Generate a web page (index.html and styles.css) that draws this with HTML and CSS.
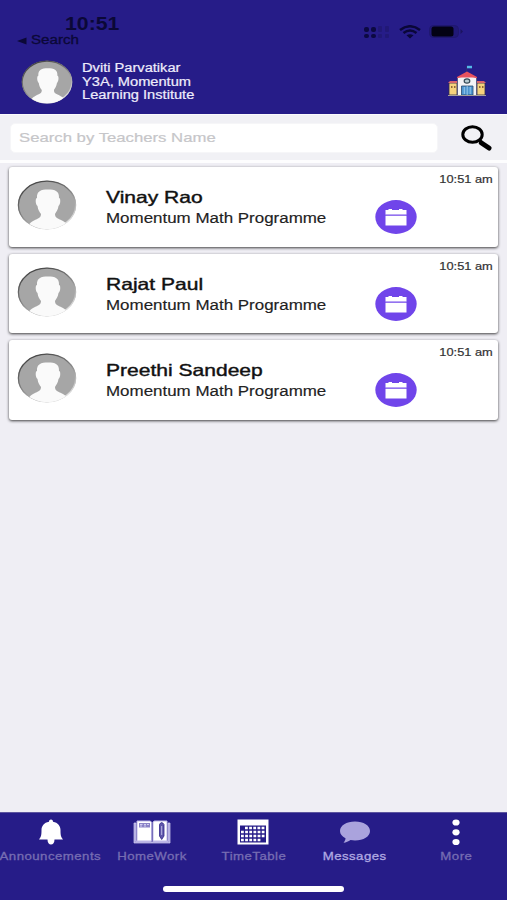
FILE: index.html
```html
<!DOCTYPE html>
<html lang="en">
<head>
    <meta charset="UTF-8">
    <meta name="viewport" content="width=device-width, initial-scale=1.0">
    <title>Messages</title>
    <link rel="stylesheet" href="styles.css">
</head>
<body>
    <!-- Shared icons -->
    <svg class="symbols" width="0" height="0">
        <symbol id="avatar" viewBox="0 0 60 50" preserveAspectRatio="none">
            <clipPath id="avatar-clip"><ellipse cx="30" cy="25" rx="29" ry="24.2"/></clipPath>
            <linearGradient id="ring" x1="0" y1="0" x2=".6" y2="1">
                <stop offset="0" stop-color="#333"/>
                <stop offset=".5" stop-color="#777"/>
                <stop offset="1" stop-color="#ddd"/>
            </linearGradient>
            <ellipse cx="30" cy="25" rx="29" ry="24.2" fill="#a6a6a6"/>
            <ellipse cx="30" cy="25" rx="28.6" ry="23.8" fill="none" stroke="url(#ring)" stroke-width="1.3"/>
            <path clip-path="url(#avatar-clip)" fill="#fafafa" d="M20 18C19.500 11 24 9.500 31 9.500S42.500 11 42 18C44 18 43.500 25 41.500 26C41 30 39 32 38 34C38 38 41 38.500 45 40.500C49 42.500 50 44 52 50H10C12 44 13 42.500 17 40.500C21 38.500 24 38 24 34C22.500 32 21 30 20.500 26C18.500 25 18 18 20 18Z"/>
        </symbol>
        <symbol id="calendar" viewBox="0 0 42 34">
            <ellipse cx="21" cy="17" rx="20.7" ry="16.9" fill="#7045ea"/>
            <path fill="#fff" d="M10.500 10H13.500V9H17V10H24V9H27.500V10H31.500V14.200H10.500ZM10.500 15.700H31.500V25.500H10.500Z"/>
            <path fill="#c3b2f6" d="M10.500 14.200H31.500V15H10.500Z"/>
        </symbol>
    </svg>

    <div class="app">
        <header class="header">
            <div class="status-bar">
                <div class="status-left">
                    <div class="clock"><span class="wide">10:51</span></div>
                    <div class="back">
                        <svg width="10" height="8" viewBox="0 0 10 8"><path d="M0 4L9.500 .5V7.500Z"/></svg>
                        <span class="wide">Search</span>
                    </div>
                </div>
                <div class="status-right">
                    <svg width="26" height="14" viewBox="0 0 26 14">
                        <g fill="#0c0941">
                            <rect x="0" y="2" width="5" height="5" rx="2"/>
                            <rect x="7" y="2" width="5" height="5" rx="2"/>
                            <rect x="0" y="9" width="5" height="4" rx="2"/>
                            <rect x="7" y="9" width="5" height="4" rx="2"/>
                        </g>
                        <g fill="#211876">
                            <rect x="14" y="1" width="4" height="6" rx="1"/>
                            <rect x="21" y="1" width="4" height="6" rx="1"/>
                            <rect x="14" y="9" width="4" height="4" rx="1"/>
                            <rect x="21" y="9" width="4" height="4" rx="1"/>
                        </g>
                    </svg>
                    <svg class="wifi" width="22" height="14" viewBox="0 0 22 14" fill="none" stroke="#0a0738" stroke-width="2.5">
                        <path d="M1 5Q11 -2.500 21 5M4.500 8Q11 3 17.500 8"/>
                        <path d="M7.500 10.300Q11 8 14.500 10.300L11 13.500Z" fill="#0a0738" stroke="none"/>
                    </svg>
                    <svg class="battery" width="35" height="14" viewBox="0 0 35 14">
                        <rect x=".5" y=".5" width="29" height="12" rx="4" fill="#211977" stroke="#1f176f"/>
                        <rect x="2.5" y="1.5" width="22" height="10" rx="2.5" fill="#030214"/>
                        <path d="M31.500 4L34 6.500L31.500 9Z" fill="#1b135f"/>
                    </svg>
                </div>
            </div>
            <div class="profile">
                <svg class="profile-avatar"><use href="#avatar"/></svg>
                <div class="profile-text">
                    <div class="wide">Dviti Parvatikar</div>
                    <div class="wide">Y3A, Momentum</div>
                    <div class="wide">Learning Institute</div>
                </div>
                <svg class="school" width="38" height="32" viewBox="0 0 38 32">
                    <path d="M18.500 1V8" stroke="#30306f" stroke-width=".8"/>
                    <path d="M19 .8H24V3.300H19Z" fill="#55b9e8"/>
                    <path d="M1 18H9V30H1ZM29 18H37V30H29Z" fill="#f6d27c" stroke="#302d4b" stroke-width=".8"/>
                    <path d="M0 18L2 16H9V18ZM29 16H36L38 18H29Z" fill="#d9646c"/>
                    <path d="M9.500 12.500L19 9L28.500 12.500V30.500H9.500Z" fill="#f3f3f5" stroke="#3c3a55" stroke-width=".6"/>
                    <path d="M9 13V12L19 6.500L29 12V13L24 12.500H14Z" fill="#e8525e"/>
                    <ellipse cx="19" cy="16" rx="2.8" ry="2.2" fill="#b9cdd3" stroke="#354955" stroke-width="1.2"/>
                    <path d="M13.500 21H25V30H13.500Z" fill="#4d94cf" stroke="#27496d" stroke-width=".8"/>
                    <path d="M19.200 21V30M16.300 22V29M22.200 22V29" stroke="#a8d5f2" stroke-width=".8"/>
                    <path d="M3 21H4.500V23H3ZM6 21H7.500V23H6ZM31 21H32.500V23H31ZM34 21H35.500V23H34Z" fill="#8f6737"/>
                    <path d="M0 30.500H38" stroke="#a69e9a" stroke-width="1"/>
                </svg>
            </div>
        </header>

        <div class="search-bar">
            <div class="search-field"><span class="wide">Search by Teachers Name</span></div>
            <svg class="search-icon" width="31" height="26" viewBox="0 0 31 26" fill="none" stroke="#000">
                <ellipse cx="11.5" cy="9.5" rx="9.7" ry="7.8" stroke-width="3"/>
                <path d="M18 15L21 18" stroke-width="3.5"/>
                <path d="M20.500 18L28 23" stroke-width="5" stroke-linecap="round"/>
            </svg>
        </div>

        <main class="teachers">
            <div class="card">
                <svg class="card-avatar"><use href="#avatar"/></svg>
                <div class="card-text">
                    <div class="name wide">Vinay Rao</div>
                    <div class="subject wide">Momentum Math Programme</div>
                </div>
                <svg class="card-calendar"><use href="#calendar"/></svg>
                <div class="time"><span class="wide">10:51 am</span></div>
            </div>
            <div class="card">
                <svg class="card-avatar"><use href="#avatar"/></svg>
                <div class="card-text">
                    <div class="name wide">Rajat Paul</div>
                    <div class="subject wide">Momentum Math Programme</div>
                </div>
                <svg class="card-calendar"><use href="#calendar"/></svg>
                <div class="time"><span class="wide">10:51 am</span></div>
            </div>
            <div class="card">
                <svg class="card-avatar"><use href="#avatar"/></svg>
                <div class="card-text">
                    <div class="name wide">Preethi Sandeep</div>
                    <div class="subject wide">Momentum Math Programme</div>
                </div>
                <svg class="card-calendar"><use href="#calendar"/></svg>
                <div class="time"><span class="wide">10:51 am</span></div>
            </div>
        </main>

        <footer class="footer">
            <nav class="tabs">
                <div class="tab">
                    <svg width="26" height="28" viewBox="0 0 26 28" fill="#fff">
                        <path d="M13 1.500C14.300 1.500 15 2.500 15 3.700C20 4.500 22.500 8 22.500 12C22.500 17.500 23 19 25 21.500H16.500C16.500 25 15 26.500 13 26.500S9.500 25 9.500 21.500H1C3 19 3.500 17.500 3.500 12C3.500 8 6 4.500 11 3.700C11 2.500 11.700 1.500 13 1.500Z"/>
                    </svg>
                    <span class="wide">Announcements</span>
                </div>
                <div class="tab">
                    <svg width="38" height="28" viewBox="0 0 38 28">
                        <path d="M1 5H3V23H17L19 24L21 23H35V5H37V25H1Z" fill="#aaa3dc" stroke="#d5d1f4" stroke-width=".7"/>
                        <path d="M4 3H17L18.500 4V23H4ZM20 4L21.500 3H34V23H20Z" fill="#fff" stroke="#bdb7e8" stroke-width="1"/>
                        <path d="M6 5H17V9.500H6Z" fill="#8b83c7"/>
                        <path d="M7 6.500H9.500M11 6.500H13M14 6.500H16M7 8H9M11 8H13" stroke="#e5e2fa" stroke-width=".8"/>
                        <path d="M26.500 6.500Q28.500 2.500 31 6.500V18L28.700 21.500L26.500 18Z" fill="#5e55a9" stroke="#30268a" stroke-width=".8"/>
                        <path d="M28.700 8V17" stroke="#bbb5e5" stroke-width="1"/>
                        <path d="M19.200 4V24" stroke="#7c73bd" stroke-width=".8"/>
                    </svg>
                    <span class="wide">HomeWork</span>
                </div>
                <div class="tab">
                    <svg width="32" height="28" viewBox="0 0 32 28">
                        <path d="M.5 1.500H31.500V26.500H.5Z" fill="#fff"/>
                        <path d="M3 7.500H29V24.500H3Z" fill="#261c88"/>
                        <path d="M8 10H27.500M4 14H27.500M4 18H27.500M4 22H24" stroke="#fff" stroke-width="2.6" stroke-dasharray="2.8 1.35"/>
                    </svg>
                    <span class="wide">TimeTable</span>
                </div>
                <div class="tab tab-active">
                    <svg width="32" height="28" viewBox="0 0 32 28">
                        <path d="M16 3.500C24.500 3.500 31 7.500 31 13S24.500 22.500 16 22.500C14.500 22.500 13 22.300 11.500 22C9.500 23.500 7 24.500 4.500 24.800C6 23 6.500 21.500 6.500 20.300C3 18.500 1 16 1 13C1 7.500 7.500 3.500 16 3.500Z" fill="#aaa3dd"/>
                    </svg>
                    <span class="wide">Messages</span>
                </div>
                <div class="tab">
                    <svg width="10" height="28" viewBox="0 0 10 28" fill="#fff">
                        <ellipse cx="5" cy="4.5" rx="3.6" ry="3.1"/>
                        <ellipse cx="5" cy="14.3" rx="3.6" ry="3.1"/>
                        <ellipse cx="5" cy="24" rx="3.6" ry="3.1"/>
                    </svg>
                    <span class="wide">More</span>
                </div>
            </nav>
            <div class="home-indicator"></div>
        </footer>
    </div>
</body>
</html>
```
FILE: styles.css
```css
* {
    box-sizing: border-box;
}

body {
    margin: 0;
    font-family: "Liberation Sans", Arial, sans-serif;
    background-color: #efeef4;
}

svg {
    display: block;
    flex-shrink: 0;
}

.symbols {
    position: absolute;
}

.app {
    display: flex;
    flex-direction: column;
    width: 507px;
    height: 900px;
    overflow: hidden;
}

/* extended letterforms */
.wide {
    display: block;
    width: max-content;
    white-space: nowrap;
    transform: scaleX(1.22);
    transform-origin: left center;
}

.header {
    height: 114px;
    background-color: #261c88;
    flex-shrink: 0;
}

.status-bar {
    display: flex;
    justify-content: space-between;
    height: 56px;
    padding: 14px 43px 0 17px;
}

.clock {
    padding-left: 48px;
    font-size: 18px;
    line-height: 20px;
    font-weight: bold;
    color: #0b0837;
}

.clock .wide {
    transform: scaleX(1.18);
}

.back {
    display: flex;
    align-items: center;
    gap: 4px;
    font-size: 12px;
    line-height: 13px;
    color: #0b0837;
    fill: #0b0837;
    -webkit-text-stroke: 0.3px #0b0837;
}

.back .wide {
    transform: scaleX(1.26);
}

.status-right {
    display: flex;
    padding-top: 11px;
}

.wifi {
    margin-left: 9px;
}

.battery {
    margin-left: 8px;
}

.profile {
    display: flex;
    padding: 3px 21px 0 21px;
}

.profile-avatar {
    width: 52px;
    height: 44px;
    margin-top: 1px;
}

.profile-text {
    flex: 1;
    margin: 3px 0 0 9px;
    font-size: 12px;
    line-height: 13.7px;
    color: #eeecfb;
    -webkit-text-stroke: 0.2px #eeecfb;
}

.school {
    margin-top: 6px;
}

.search-bar {
    display: flex;
    height: 49px;
    padding: 8px 15px 0 10px;
    background-color: #f1f1f5;
    border-top: 1px solid #fbfbfd;
    border-bottom: 3px solid #fdfdfe;
    flex-shrink: 0;
}

.search-field {
    width: 428px;
    height: 30px;
    padding-left: 8px;
    border: 1px solid #f6f6f8;
    border-radius: 5px;
    background-color: #fff;
    font-size: 13.6px;
    line-height: 28px;
    color: #c6c6c9;
    -webkit-text-stroke: 0.2px #c6c6c9;
}

.search-field .wide {
    transform: scaleX(1.23);
}

.search-icon {
    margin: 2px 0 0 23px;
}

.teachers {
    display: flex;
    flex-direction: column;
    flex: 1;
    gap: 7px;
    padding: 4px 9px;
}

.card {
    position: relative;
    display: flex;
    height: 79.5px;
    padding: 13px 0 0 8px;
    background-color: #fff;
    border-radius: 3px;
    box-shadow: 0 1px 3px rgba(0, 0, 0, 0.75);
}

.card-avatar {
    width: 60px;
    height: 50px;
}

.card-text {
    width: 269px;
    margin-left: 29px;
}

.name {
    margin-top: 7px;
    font-size: 16.5px;
    line-height: 20px;
    color: #111;
    -webkit-text-stroke: 0.4px #111;
    transform: scaleX(1.275);
}

.subject {
    margin-top: 1px;
    font-size: 14px;
    line-height: 20px;
    color: #222;
    -webkit-text-stroke: 0.15px #222;
    transform: scaleX(1.21);
}

.card-calendar {
    width: 42px;
    height: 34px;
    margin-top: 20px;
}

.time {
    position: absolute;
    top: 5px;
    right: 5px;
    font-size: 10.5px;
    line-height: 14px;
    color: #333;
    -webkit-text-stroke: 0.2px #333;
}

.time .wide {
    transform-origin: right center;
}

.footer {
    height: 88px;
    background-color: #261c88;
    border-top: 1px solid #5c549f;
    flex-shrink: 0;
}

.tabs {
    display: grid;
    grid-template-columns: repeat(5, 1fr);
    height: 73px;
    padding-top: 5px;
}

.tab {
    display: flex;
    flex-direction: column;
    align-items: center;
    font-size: 11px;
    line-height: 14px;
    letter-spacing: 0.4px;
    color: #766db2;
    -webkit-text-stroke: 0.3px currentColor;
}

.tab .wide {
    margin-top: 3px;
    transform: scaleX(1.2);
    transform-origin: center;
}

.tab-active {
    color: #b0a9e2;
}

.home-indicator {
    width: 181px;
    height: 6px;
    margin: 0 auto;
    border-radius: 3px;
    background-color: #fff;
}
```
